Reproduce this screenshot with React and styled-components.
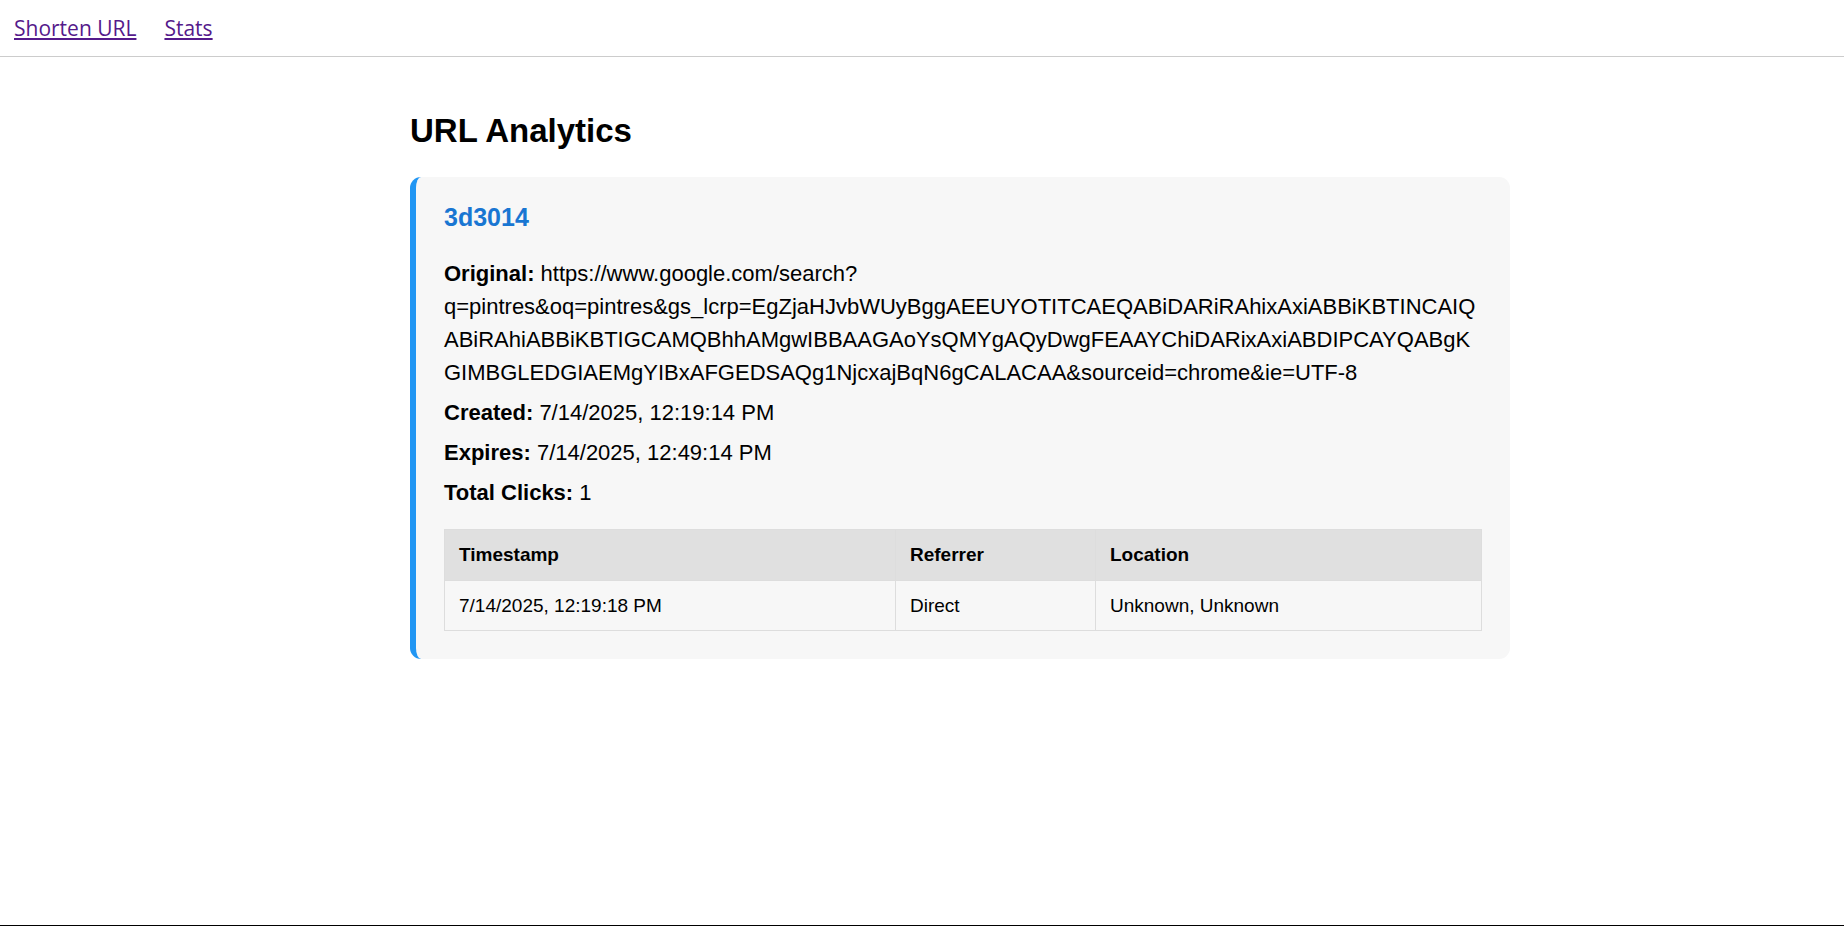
import React from "react";
import styled, { createGlobalStyle } from "styled-components";

const GlobalStyle = createGlobalStyle`
  *, *::before, *::after {
    box-sizing: border-box;
  }
  body {
    margin: 0;
    background: #fff;
    color: #000;
    font-family: Arial, "Liberation Sans", sans-serif;
  }
`;

const Page = styled.div`
  display: flex;
  flex-direction: column;
  min-height: 100vh;
  border-bottom: 1px solid #000;
`;

const NavBar = styled.nav`
  display: flex;
  gap: 28px;
  padding: 14px;
  border-bottom: 1px solid #ccc;
  font-family: "Segoe UI", "Open Sans", sans-serif;
  font-size: 21px;
  line-height: 28px;
`;

const NavLink = styled.a`
  color: #551a8b;
  text-decoration: underline;
`;

const Main = styled.main`
  flex: 1;
  display: flex;
  justify-content: center;
  padding: 56px 0 56px 76px;
`;

const Content = styled.div`
  width: 100%;
  max-width: 1100px;
`;

const Title = styled.h1`
  margin: 0 0 28px;
  font-size: 33px;
  line-height: 36px;
`;

const Card = styled.section`
  padding: 28px;
  border-left: 6px solid #2196f3;
  border-radius: 11px;
  background: #f7f7f7;
`;

const ShortCode = styled.h2`
  margin: 0 0 28px;
  color: #1976d2;
  font-size: 25px;
  line-height: 24px;
`;

const Detail = styled.p`
  margin: 7px 0;
  font-size: 22px;
  line-height: 33px;
  word-break: break-word;
`;

const ClickTable = styled.table`
  width: 100%;
  margin-top: 20px;
  border-collapse: collapse;
  font-size: 19px;
  line-height: 21px;
`;

const HeadCell = styled.th`
  width: ${(p) => p.$width};
  padding: 14px;
  border: 1px solid #ddd;
  background: #e0e0e0;
  line-height: 22px;
  text-align: left;
`;

const Cell = styled.td`
  padding: 14px;
  border: 1px solid #ddd;
`;

const details = [
  [
    "Original",
    "https://www.google.com/search?q=pintres&oq=pintres&gs_lcrp=EgZjaHJvbWUyBggAEEUYOTITCAEQABiDARiRAhixAxiABBiKBTINCAIQABiRAhiABBiKBTIGCAMQBhhAMgwIBBAAGAoYsQMYgAQyDwgFEAAYChiDARixAxiABDIPCAYQABgKGIMBGLEDGIAEMgYIBxAFGEDSAQg1NjcxajBqN6gCALACAA&sourceid=chrome&ie=UTF-8",
  ],
  ["Created", "7/14/2025, 12:19:14 PM"],
  ["Expires", "7/14/2025, 12:49:14 PM"],
  ["Total Clicks", "1"],
];

const columns = [
  { label: "Timestamp", width: "auto" },
  { label: "Referrer", width: "200px" },
  { label: "Location", width: "386px" },
];

const clicks = [["7/14/2025, 12:19:18 PM", "Direct", "Unknown, Unknown"]];

export default function App() {
  return (
    <Page>
      <GlobalStyle />
      <NavBar>
        <NavLink href="#shorten">Shorten URL</NavLink>
        <NavLink href="#stats">Stats</NavLink>
      </NavBar>
      <Main>
        <Content>
          <Title>URL Analytics</Title>
          <Card>
            <ShortCode>3d3014</ShortCode>
            {details.map(([label, value]) => (
              <Detail key={label}>
                <strong>{label}:</strong> {value}
              </Detail>
            ))}
            <ClickTable>
              <thead>
                <tr>
                  {columns.map((c) => (
                    <HeadCell key={c.label} scope="col" $width={c.width}>
                      {c.label}
                    </HeadCell>
                  ))}
                </tr>
              </thead>
              <tbody>
                {clicks.map((row) => (
                  <tr key={row[0]}>
                    {row.map((value) => (
                      <Cell key={value}>{value}</Cell>
                    ))}
                  </tr>
                ))}
              </tbody>
            </ClickTable>
          </Card>
        </Content>
      </Main>
    </Page>
  );
}
